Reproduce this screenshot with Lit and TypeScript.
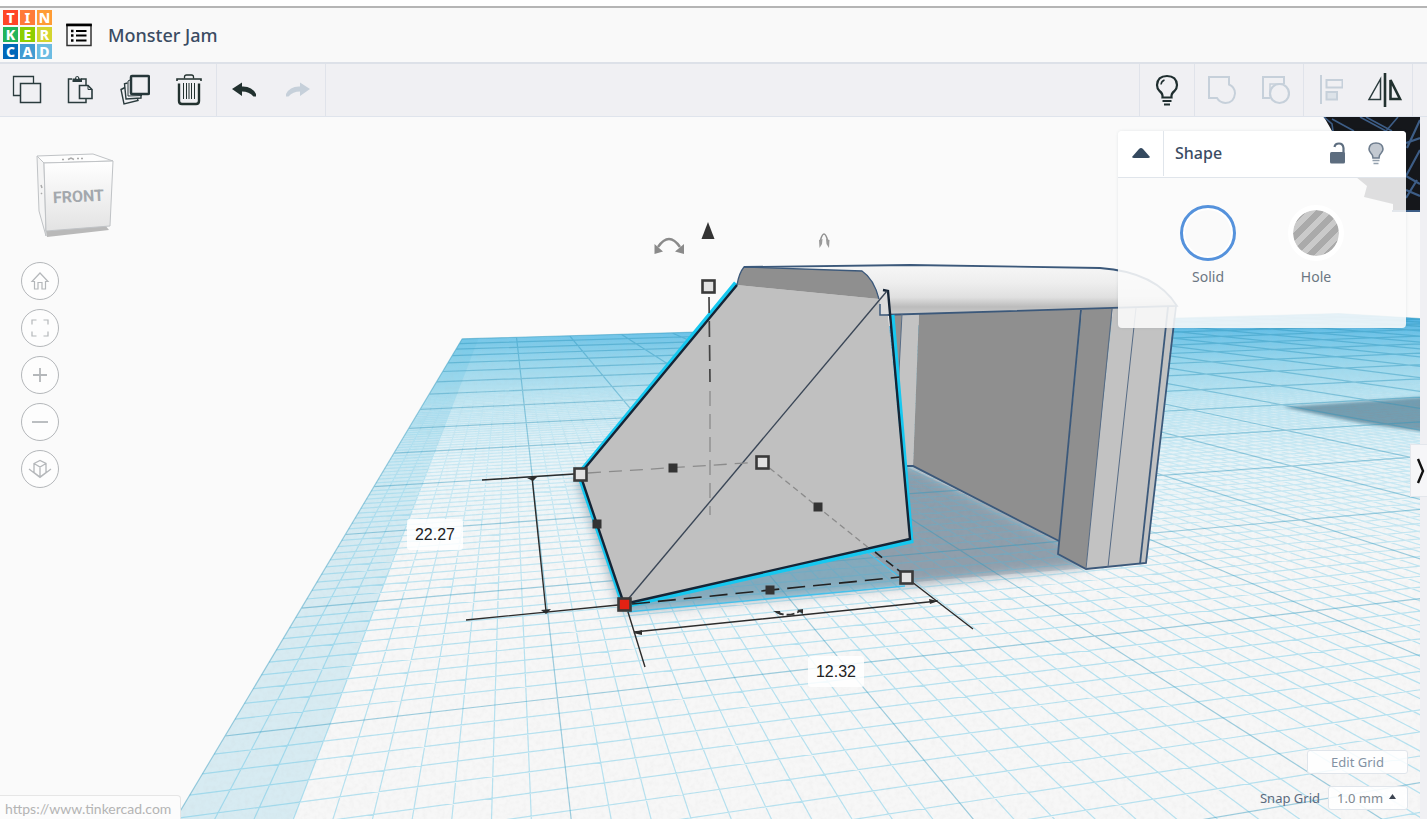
import { LitElement, html, svg, css } from "lit";
import { customElement, property } from "lit/decorators.js";

/* ---------- perspective grid ---------- */
const ORIGIN = [225, 736];
const VANISH_U = [4760, 215];
const VANISH_V = [508, 262];
const U = 0.0791;
const V = 0.3697;
const FAR = 14;
const WIDE = 20;
const NEAR_W = 0.45;

function project(u: number, v: number): [number, number] {
  const w = 1 + u * U + v * V;
  return [0, 1].map(
    (i) => (ORIGIN[i] + u * U * VANISH_U[i] + v * V * VANISH_V[i]) / w,
  ) as [number, number];
}
const pt = (u: number, v: number) => project(u, v).map((n) => n.toFixed(1)).join(" ");
const nearV = (u: number) => (NEAR_W - 1 - u * U) / V;

function gridPaths() {
  let minor = "";
  let major = "";
  for (let i = 0; i <= WIDE * 10; i++) {
    const u = i / 10;
    const d = `M${pt(u, nearV(u))}L${pt(u, FAR)}`;
    if (i % 10 === 0) major += d;
    else minor += d;
  }
  for (let j = -50; j <= FAR * 10; j++) {
    const v = j / 10;
    const start = Math.max(0, (NEAR_W - 1 - v * V) / U);
    if (start >= WIDE) continue;
    const d = `M${pt(start, v)}L${pt(WIDE, v)}`;
    if (j % 10 === 0) major += d;
    else minor += d;
  }
  return { minor, major };
}
const GRID = gridPaths();
const PLANE = `M${pt(0, nearV(0))}L${pt(0, FAR)}L${pt(WIDE, FAR)}L${pt(WIDE, nearV(WIDE))}Z`;
const MARGIN = `M${pt(0, nearV(0))}L${pt(0, FAR)}L${pt(0.3, FAR)}L${pt(0.3, nearV(0.3))}Z`;

@customElement("work-plane")
class WorkPlane extends LitElement {
  static styles = css`
    :host { display: block; }
    svg { display: block; width: 100%; height: 100%; }
  `;
  handle(x: number, y: number, fill = "#e2e2e2") {
    return svg`<rect x=${x - 5.5} y=${y - 5.5} width="12" height="12" fill=${fill} stroke="#3a3a3a" stroke-width="2.6"/>`;
  }
  knob(x: number, y: number) {
    return svg`<rect x=${x - 4.5} y=${y - 4.5} width="9" height="9" fill="#333"/>`;
  }
  render() {
    return html`<svg viewBox="0 117 1420 702" preserveAspectRatio="xMinYMin slice" aria-hidden="true">
      <defs>
        <linearGradient id="sky" gradientUnits="userSpaceOnUse" x1="0" y1="313" x2="0" y2="560">
          <stop offset="0" stop-color="#45abe0"/>
          <stop offset=".09" stop-color="#74c6e9"/>
          <stop offset=".2" stop-color="#a3daee"/>
          <stop offset=".36" stop-color="#d0ebf4"/>
          <stop offset=".6" stop-color="#e9f4f8"/>
          <stop offset="1" stop-color="#f7f7f7"/>
        </linearGradient>
        <linearGradient id="fade" gradientUnits="userSpaceOnUse" x1="0" y1="315" x2="0" y2="620">
          <stop offset="0" stop-color="#fff" stop-opacity=".1"/>
          <stop offset=".3" stop-color="#fff" stop-opacity=".3"/>
          <stop offset="1" stop-color="#fff" stop-opacity=".8"/>
        </linearGradient>
        <mask id="distance" maskUnits="userSpaceOnUse" x="0" y="117" width="1420" height="702">
          <rect x="0" y="117" width="1420" height="702" fill="url(#fade)"/>
        </mask>
        <linearGradient id="roof" gradientUnits="userSpaceOnUse" x1="0" y1="266" x2="0" y2="314">
          <stop offset="0" stop-color="#f6f6f6"/>
          <stop offset=".35" stop-color="#eeeeee"/>
          <stop offset=".65" stop-color="#e0e0e0"/>
          <stop offset=".85" stop-color="#bcbcbc"/>
          <stop offset="1" stop-color="#c9c9c9"/>
        </linearGradient>
        <filter id="soft" x="-20%" y="-20%" width="140%" height="140%"><feGaussianBlur stdDeviation="6"/></filter>
        <filter id="edge" x="-20%" y="-20%" width="140%" height="140%"><feGaussianBlur stdDeviation="1.5"/></filter>
        <filter id="grain" filterUnits="userSpaceOnUse" x="0" y="313" width="1420" height="506">
          <feTurbulence type="fractalNoise" baseFrequency=".22" numOctaves="2" seed="4"/>
          <feColorMatrix values="0 0 0 0 .5  0 0 0 0 .5  0 0 0 0 .5  .5 0 0 0 -.19"/>
          <feComposite in2="SourceGraphic" operator="in"/>
        </filter>
      </defs>
      <rect x="0" y="117" width="1420" height="702" fill="#fafafa"/>
      <path d=${PLANE} fill="url(#sky)"/>
      <path d=${MARGIN} fill="#58bfe0" fill-opacity=".2"/>
      <path d=${PLANE} fill="#000" filter="url(#grain)" opacity=".35"/>

      <path d="M576 478L600 470L890 462L915 466L1062 540L1090 566L960 580L905 586L622 612Z" fill="#4a6478" fill-opacity=".5" filter="url(#soft)"/>
      <path d="M905 466L1062 540L1088 568L960 578L905 583L868 550Z" fill="#5f7488" fill-opacity=".25"/>
      <path d="M1282 407L1425 397V432L1360 423Z" fill="#4f7286" fill-opacity=".68" filter="url(#edge)"/>

      <path d=${GRID.minor} fill="none" stroke="#45bbe2" stroke-width="1.2" mask="url(#distance)" opacity=".45"/>
      <path d=${GRID.major} fill="none" stroke="#2f96bd" stroke-width="1.2" opacity=".45"/>

      <path d="M624 607L870 553L905 585L627 612Z" fill="#5aa5c2" fill-opacity=".4"/>
      <path d="M868 553L905 581M627 612L905 586" fill="none" stroke="#46c0ea" stroke-width="1.5"/>

      <!-- frame with posts -->
      <path d="M889 313H902L899 390Z" fill="#8f8f8f"/>
      <path d="M902 314L919 314L913 466L907 466L898 385Z" fill="#c3c3c3"/>
      <path d="M919 314L1082 309L1059 541L913 467Z" fill="#8f8f8f"/>
      <path d="M1082 309L1113 308L1086 569L1058 554Z" fill="#8f8f8f"/>
      <path d="M1113 308L1175 306L1146 563L1086 569Z" fill="#c2c2c2"/>
      <path d="M744 267L910 265L1100 268Q1156 272 1177 306L880 315V299Q876 280 862 271Z" fill="url(#roof)"/>
      <g fill="none" stroke="#3b587a" stroke-width="1.8">
        <path d="M907 466H913L1059 541"/>
        <path d="M1081 310L1058 554L1086 569L1146 563L1176 306"/>
        <path d="M1168 307L1140 564"/>
        <path d="M744 267L910 265L1100 268Q1156 272 1177 306L880 315V303"/>
        <path d="M1112 309L1086 569M1136 308L1108 567M902 314L898 390" stroke-width="1" stroke="#566b85"/>
      </g>

      <!-- selected solid -->
      <path d="M736 283L579 474L624 606L911 541L892 315" fill="none" stroke="#16c8f0" stroke-width="5"/>
      <path d="M737 285L879 299L880 302L888 315L910 539L624 604L580 474Z" fill="#c0c0c0"/>
      <path d="M880 299V315L889 314L888 291Z" fill="#dcdcdc"/>
      <path d="M737 285Q739 273 744 267L862 271Q874 279 879 299Z" fill="#8f8f8f"/>
      <path d="M737 285Q739 273 744 267L862 271Q874 279 879 299" fill="none" stroke="#3b587a" stroke-width="1.3"/>
      <path d="M880 304V315H889" fill="none" stroke="#3b587a" stroke-width="1.5"/>
      <path d="M737 285L580 474L624 604L910 539L888 291L883 290" fill="none" stroke="#152536" stroke-width="2.4"/>
      <path d="M624 604L887 291" fill="none" stroke="#3a4656" stroke-width="1.4"/>

      <!-- guides -->
      <g fill="none" stroke="#8b8b8b" stroke-width="1.3">
        <path d="M710 391V515" stroke-dasharray="15 8"/>
        <path d="M588 473L762 462" stroke-dasharray="13 8"/>
        <path d="M762 462L870 549" stroke-dasharray="6 4"/>
      </g>
      <path d="M709 297L710 382" fill="none" stroke="#444" stroke-width="1.7" stroke-dasharray="16 8"/>
      <path d="M632 604L900 577" fill="none" stroke="#222" stroke-width="1.6" stroke-dasharray="18 8"/>
      <path d="M875 552L902 573" fill="none" stroke="#222" stroke-width="1.6" stroke-dasharray="9 5"/>

      <!-- dimension lines -->
      <g fill="none" stroke="#2c2c2c" stroke-width="1.4">
        <path d="M482 480L574 474M466 620L618 605M532 477L546 611"/>
        <path d="M628 612L645 667M634 632L938 601M912 582L973 629"/>
      </g>
      <path d="M527 478L538 476L533 481ZM541 610L551 609L546 614ZM633 633L642 630V635ZM938 601L929 599L930 604Z" fill="#2c2c2c"/>
      <path d="M776 612Q788 618 800 611" fill="none" stroke="#333" stroke-width="1.8" stroke-dasharray="8 3"/>
      <path d="M773 611L780 611L781 615ZM797 610L803 609L803 614Z" fill="#333"/>

      ${this.knob(673, 468)}${this.knob(597, 524)}${this.knob(818, 507)}${this.knob(770, 590)}
      ${this.handle(708, 286)}${this.handle(580, 474)}${this.handle(762, 462)}${this.handle(906, 577)}
      ${this.handle(624, 604, "#e32213")}
      <path d="M708 222L714.500 239H701.500Z" fill="#333"/>
      <path d="M658 247Q669 231 680 247" fill="none" stroke="#8a8a8a" stroke-width="2.400"/>
      <path d="M654.500 244V254L663 251.500ZM684 244V254L675 251.500Z" fill="#8a8a8a"/>
      <path d="M820.500 240Q824 228 827.500 240" fill="none" stroke="#8f8f8f" stroke-width="1.500"/>
      <path d="M819 240L822.500 239L822 244L819.500 248ZM829.500 240L826 239L826.500 244L829 248Z" fill="#9a9a9a"/>

      <!-- neighbouring wheel -->
      <path d="M1324 117H1420V212H1393V204L1364 197L1367 186L1356 177L1360 165L1335 150L1332 131Z" fill="#15171b"/>
      <g fill="none" stroke="#3d5d86" stroke-width="1.6">
        <path d="M1324 117L1332 124L1333 131M1332 119L1354 131M1360 117L1386 131M1366 117L1392 131M1398 117L1386 131"/>
        <path d="M1420 120L1407 148M1406 143L1420 138M1420 150L1406 176M1406 176L1420 184M1417 180L1406 198M1406 190L1420 196M1392 211H1420" stroke-width="2.2"/>
      </g>
    </svg>`;
  }
}

/* ---------- icons ---------- */
const icon = (w: number, h: number, body: unknown) =>
  html`<svg width=${w} height=${h} viewBox="0 0 ${w} ${h}" fill="none" aria-hidden="true">${body}</svg>`;

const icons = {
  list: icon(26, 24, svg`<rect x="1" y="1.500" width="24" height="21" stroke="#333" stroke-width="1.500"/><path d="M.2 2H25.800" stroke="#000" stroke-width="2.600"/><path d="M10 8H20.500M10 12.500H20.500M10 17.500H20.500" stroke="#000" stroke-width="2"/><path d="M5 8H7.500M5 12.500H7.500M5 17.500H7.500" stroke="#000" stroke-width="2.400"/>`),
  copy: icon(30, 30, svg`<path d="M8 20.500H1.500V1.500H21.500V8" stroke="#2a3b3d" stroke-width="1.300"/><rect x="8.500" y="8.500" width="20" height="19" stroke="#2a3b3d" stroke-width="1.500"/>`),
  paste: icon(28, 30, svg`<path d="M5 4H1.500V27.500H19V23M14 4H19V10" stroke="#2a3b3d" stroke-width="1.500"/><path d="M5.500 7V3.500H8Q8 1 10.200 1T12.500 3.500H15V7Z" fill="#2a3b3d"/><circle cx="10.200" cy="3" r="1" fill="#f0f0f3"/><path d="M12.500 10.500H21L25 14.500V23.500H12.500Z" stroke="#2a3b3d" stroke-width="1.600" fill="#f0f0f3"/><path d="M21 10.500V14.500H25" stroke="#2a3b3d"/>`),
  duplicate: icon(30, 32, svg`<path d="M5 13.500L1 15.500L4 30L18 26.500L17.500 25" stroke="#2a3b3d" stroke-width="1.400"/><path d="M7.500 9L4.500 9.800L6 25L21 24V21.500" stroke="#2a3b3d" stroke-width="1.400"/><path d="M10 6L8 7V22L22 21.500" stroke="#2a3b3d" stroke-width="1"/><rect x="11" y="2" width="18" height="18" rx="1" stroke="#26373a" stroke-width="2.500" fill="#f0f0f3"/>`),
  trash: icon(26, 34, svg`<path d="M1 8V6H25V8" stroke="#22312f" stroke-width="1.600"/><path d="M8.500 5.500V4Q8.500 2 10.500 2H15.500Q17.500 2 17.500 4V5.500" stroke="#22312f" stroke-width="1.300"/><path d="M3 10.500V28Q3 31 6 31H20Q23 31 23 28V10.500" stroke="#22312f" stroke-width="2.400"/><path d="M7.500 10V26M10.500 10V26M13 10V26M15.500 10V26M18.500 10V26" stroke="#22312f" stroke-width="1"/>`),
  undo: icon(24, 18, svg`<path d="M0 8L10 1.500V5.500Q20 5 24 13V15.500H21.500Q17 10.500 10 10.500V15Z" fill="#22312f"/>`),
  redo: icon(24, 18, svg`<path d="M24 8L14 1.500V5.500Q4 5 0 13V15.500H2.500Q7 10.500 14 10.500V15Z" fill="#c6d0da"/>`),
  bulb: icon(24, 34, svg`<path d="M7.500 24.500Q8 20.500 4.500 18Q2 15.500 2 12Q2.500 3 12 3Q21.500 3 22 12Q22 15.500 19.500 18Q16 20.500 16.500 24.500Z" stroke="#1f2e2f" stroke-width="2.200"/><path d="M6 11.500Q6.500 8 9.500 7" stroke="#1f2e2f" stroke-width="1.500"/><path d="M7.500 28H16.500M9 31.500H15" stroke="#1f2e2f" stroke-width="1.800"/>`),
  group: icon(28, 30, svg`<path d="M1 2H21V9.500Q27 12 27 18.500Q26 28 17.500 28Q11.500 27.500 9 23H1Z" stroke="#c6d0da" stroke-width="2"/>`),
  ungroup: icon(28, 30, svg`<path d="M8 23H1V2H22V9" stroke="#c6d0da" stroke-width="2"/><path d="M8 21V9H21" stroke="#c6d0da" stroke-width="1.500"/><circle cx="17.500" cy="18.500" r="9.500" stroke="#c6d0da" stroke-width="2.200"/>`),
  align: icon(24, 30, svg`<path d="M2 0V29" stroke="#c6d0da" stroke-width="2"/><rect x="7.500" y="5" width="16" height="7.500" stroke="#c6d0da" stroke-width="2"/><rect x="7.500" y="17" width="10.500" height="7.500" stroke="#c6d0da" stroke-width="2" fill="#dde3e9"/>`),
  mirror: icon(36, 34, svg`<path d="M13.500 6V26.500H2Z" stroke="#2a3b3d" stroke-width="1.500"/><path d="M18 0V34" stroke="#22312f" stroke-width="2.600"/><path d="M23.500 7V26H33Z" stroke="#22312f" stroke-width="2.600"/>`),
  home: icon(20, 20, svg`<path d="M2 10.500L10 2L18 10.500H15.500V18H12V11.500H8V18H4.500V10.500Z" stroke="#b4b7ba" stroke-width="1.200"/>`),
  fit: icon(20, 20, svg`<path d="M2 6.500V2H6.500M13.500 2H18V6.500M18 13.500V18H13.500M6.500 18H2V13.500" stroke="#b4b7ba" stroke-width="1.200"/>`),
  plus: icon(20, 20, svg`<path d="M10 3V17M3 10H17" stroke="#b4b7ba" stroke-width="1.800"/>`),
  minus: icon(20, 20, svg`<path d="M2 10H18" stroke="#b4b7ba" stroke-width="1.800"/>`),
  ortho: icon(24, 20, svg`<path d="M6 4.500L12 1.500L18 4.500V13.500L12 18L6 13.500ZM6 4.500L12 8L18 4.500M12 8V18M1 10L12 18.500L23 10" stroke="#b4b7ba" stroke-width="1.300"/>`),
  up: icon(18, 12, svg`<path d="M0 10L7 2Q9 0 11 2L18 10Q17.500 11 16 11H2Q.5 11 0 10Z" fill="#34495f"/>`),
  lock: icon(16, 22, svg`<rect x="0" y="10" width="15" height="11.500" rx="1.500" fill="#5d6d7f"/><path d="M4.500 5Q5 1.500 9 1.500T13.500 6V11" stroke="#5d6d7f" stroke-width="2.200"/>`),
  lamp: icon(16, 23, svg`<path d="M5 16Q5 13 2.800 11Q1 9 1 7Q1.500 1 8 1T15 7Q15 9 13.200 11Q11 13 11 16Z" fill="#c3c9d1" stroke="#6f7e8f" stroke-width="1.600"/><path d="M4.500 18.500H11.500M5.500 21.500H10.500" stroke="#93a0ad" stroke-width="1.600"/>`),
};

const LOGO: [string, string][] = [
  ["T", "#ff4527"], ["I", "#ff7a38"], ["N", "#ff9c35"],
  ["K", "#22b45b"], ["E", "#8fce00"], ["R", "#d3d52f"],
  ["C", "#0067b9"], ["A", "#409bd2"], ["D", "#6cbce2"],
];

@customElement("tool-button")
class ToolButton extends LitElement {
  @property() name = "copy";
  @property() label = "";
  @property({ type: Boolean }) off = false;
  static styles = css`
    :host { display: flex; justify-content: center; align-items: center; }
    button { display: flex; border: 0; padding: 0; background: none; }
    svg { display: block; }
  `;
  render() {
    return html`<button type="button" aria-label=${this.label} ?disabled=${this.off}>${(icons as any)[this.name]}</button>`;
  }
}

@customElement("app-root")
class AppRoot extends LitElement {
  static styles = css`
    :host {
      display: flex; flex-direction: column; height: 100vh; overflow: hidden;
      background: #f0f0f3; color: #3b4c63;
      font-family: "Noto Sans", "Open Sans", sans-serif;
    }
    * { box-sizing: border-box; }
    button, input, select { font: inherit; color: inherit; margin: 0; }
    svg { display: block; }
    .header {
      display: flex; align-items: center; height: 64px; flex: none; padding: 1px 0 0 3px;
      background: #f9f9f9; border-top: 6px solid #fff; border-bottom: 2px solid #dde1e8;
      position: relative;
    }
    .header::before { content: ""; position: absolute; left: 0; right: 0; top: 0; height: 2px; background: #b5b5b5; }
    .logo { display: grid; grid-template-columns: repeat(3, 15px); grid-auto-rows: 15px; gap: 2px; text-decoration: none; }
    .tile { color: #fff; font-weight: 800; font-size: 14px; line-height: 15px; text-align: center; }
    .menu { display: flex; margin-left: 14px; border: 0; padding: 0; background: none; }
    h1 { margin: 0 0 0 16px; font-size: 18px; line-height: 24px; font-weight: 500; }
    .toolbar { display: flex; height: 53px; flex: none; background: #f0f0f3; border-bottom: 1px solid #dfe4ec; }
    .set { display: grid; grid-auto-flow: column; grid-auto-columns: 54px; border-right: 1px solid #e0e3ea; }
    .set.first { border-left: 1px solid #e0e3ea; }
    .set.last { margin-right: 14px; }
    .space { flex: 1; }
    .stage { flex: 1; display: grid; grid-template-columns: 1fr 7px; min-height: 0; position: relative; overflow: hidden; }
    work-plane { min-height: 0; overflow: hidden; }
    .views { position: absolute; left: 21px; top: 29px; display: flex; flex-direction: column; }
    .cube { margin-left: 7px; }
    .cube text { font: 700 16px Roboto, "Noto Sans", sans-serif; fill: #a3a8ad; }
    .round {
      display: grid; place-items: center; width: 38px; height: 38px; border-radius: 50%; padding: 0;
      border: 1px solid #b4b7ba; background: #fdfdfd;
    }
    .rounds { display: grid; gap: 9px; margin-top: 20px; }
    .size {
      position: absolute; width: 56px; height: 31px; border: 0; border-radius: 3px; padding: 0;
      background: rgba(255, 255, 255, 0.85); color: #222; text-align: center;
      font: 16px "Liberation Sans", Arial, sans-serif;
    }
    .depth { left: 407px; top: 402px; }
    .width { left: 808px; top: 539px; }
    .panel {
      position: absolute; right: 21px; top: 14px; width: 288px; border-radius: 4px; overflow: hidden;
      background: rgba(250, 250, 250, 0.88); box-shadow: 0 0 3px rgba(60, 80, 100, 0.12);
    }
    .bar { display: flex; align-items: center; height: 47px; background: #fff; border-bottom: 1px solid #e0e5eb; padding: 0 22px 2px 0; }
    .plain { display: flex; border: 0; padding: 0; background: none; }
    .fold { width: 46px; height: 46px; justify-content: center; align-items: center; border-right: 1px solid #e0e5eb; }
    h2 { flex: 1; margin: 0 0 0 11px; font-size: 16px; line-height: 22px; font-weight: 500; }
    .lamp { margin-left: 22px; }
    fieldset { display: grid; grid-template-columns: 108px 108px; justify-content: center; height: 150px; border: 0; margin: 0; padding: 27px 0 0; }
    .kind { display: flex; flex-direction: column; align-items: center; gap: 7px; font-size: 14px; line-height: 18px; color: #6b7682; }
    .kind input { appearance: none; width: 56px; height: 56px; border-radius: 50%; border: 5px solid #fff; background: #fafafa; }
    .kind input:checked { border: 3px solid #5592dc; box-shadow: inset 0 0 0 2px #fff; }
    .kind .hole { background: repeating-linear-gradient(135deg, #aaa 0 6px, #cacaca 6px 12px) border-box; background-clip: padding-box; }
    .grid-tools { position: absolute; right: 19px; bottom: 9px; display: flex; flex-direction: column; align-items: flex-end; gap: 12px; font-size: 13px; }
    .edit { width: 101px; height: 24px; padding: 0; border: 1px solid #e0e5eb; border-radius: 3px; background: rgba(255, 255, 255, 0.85); color: #8392a3; }
    .snap { display: flex; align-items: center; gap: 8px; height: 24px; color: #5b6a7d; }
    .pick { position: relative; display: flex; }
    select { appearance: none; width: 80px; height: 24px; padding: 0 8px; border: 1px solid #e0e5eb; border-radius: 3px; background: rgba(255, 255, 255, 0.9); color: #808890; }
    .pick svg { position: absolute; right: 12px; top: 8px; pointer-events: none; }
    .drawer {
      position: absolute; right: 0; top: 327px; width: 17px; height: 53px; padding: 0;
      border: 1px solid #e4e7ec; border-right: 0; background: #f6f6f8; display: grid; place-items: center end;
    }
    .status {
      position: absolute; left: 0; bottom: 0; height: 24px; padding: 0 9px 0 5px; border: 1px solid #e6e6e6;
      border-width: 1px 1px 0 0; border-radius: 0 4px 0 0; background: #fcfcfc; color: #b4b4b4;
      font: 14px/25px Lato, "Noto Sans", sans-serif; text-decoration: none;
    }
  `;

  render() {
    return html`
      <header class="header">
        <a class="logo" href="#" aria-label="Tinkercad home">
          ${LOGO.map(([c, bg]) => html`<span class="tile" style="background:${bg}">${c}</span>`)}
        </a>
        <button class="menu" type="button" aria-label="Designs">${icons.list}</button>
        <h1>Monster Jam</h1>
      </header>
      <nav class="toolbar" aria-label="Tools">
        <div class="set">
          <tool-button name="copy" label="Copy"></tool-button>
          <tool-button name="paste" label="Paste"></tool-button>
          <tool-button name="duplicate" label="Duplicate"></tool-button>
          <tool-button name="trash" label="Delete"></tool-button>
        </div>
        <div class="set">
          <tool-button name="undo" label="Undo"></tool-button>
          <tool-button name="redo" label="Redo" off></tool-button>
        </div>
        <div class="space"></div>
        <div class="set first"><tool-button name="bulb" label="Show all"></tool-button></div>
        <div class="set">
          <tool-button name="group" label="Group" off></tool-button>
          <tool-button name="ungroup" label="Ungroup" off></tool-button>
        </div>
        <div class="set last">
          <tool-button name="align" label="Align" off></tool-button>
          <tool-button name="mirror" label="Mirror"></tool-button>
        </div>
      </nav>
      <main class="stage">
        <work-plane></work-plane>
        <div class="views">
          <svg class="cube" width="90" height="96" viewBox="28 146 90 96" aria-label="View cube">
            <defs>
              <linearGradient id="face" x1="0" y1="0" x2="0" y2="1"><stop offset="0" stop-color="#fff"/><stop offset="1" stop-color="#e3e3e3"/></linearGradient>
            </defs>
            <path d="M46 231L105 225L109 230L47 237Z" fill="#b9b9b9"/>
            <path d="M37 156L44 163L46 236L39 211Z" fill="#f4f4f4" stroke="#c0c3c6"/>
            <path d="M37 156L93 154L113 161L44 163Z" fill="#fdfdfd" stroke="#c0c3c6"/>
            <path d="M44 163L113 161L110 226L46 231Z" fill="url(#face)" stroke="#c0c3c6"/>
            <path d="M62 159.500H64M68 159.500L71 158L74 159.500M77 158.500H79M81 158.500H83M41 185L42 188M41 193L42 194" stroke="#aaa" stroke-width="1.500" fill="none"/>
            <text x="78.500" y="202" text-anchor="middle" transform="rotate(-3 78 197)">FRONT</text>
          </svg>
          <div class="rounds">
            <button class="round" type="button" aria-label="Home view">${icons.home}</button>
            <button class="round" type="button" aria-label="Fit all">${icons.fit}</button>
            <button class="round" type="button" aria-label="Zoom in">${icons.plus}</button>
            <button class="round" type="button" aria-label="Zoom out">${icons.minus}</button>
            <button class="round" type="button" aria-label="Orthographic view">${icons.ortho}</button>
          </div>
        </div>
        <input class="size depth" aria-label="Depth" value="22.27" />
        <input class="size width" aria-label="Width" value="12.32" />
        <section class="panel">
          <div class="bar">
            <button class="plain fold" type="button" aria-label="Collapse">${icons.up}</button>
            <h2>Shape</h2>
            <button class="plain" type="button" aria-label="Lock">${icons.lock}</button>
            <button class="plain lamp" type="button" aria-label="Hide">${icons.lamp}</button>
          </div>
          <fieldset aria-label="Material">
            <label class="kind"><input type="radio" name="kind" checked />Solid</label>
            <label class="kind"><input class="hole" type="radio" name="kind" />Hole</label>
          </fieldset>
        </section>
        <div class="grid-tools">
          <button class="edit" type="button">Edit Grid</button>
          <div class="snap">
            <label for="snap">Snap Grid</label>
            <span class="pick">
              <select id="snap"><option>1.0 mm</option></select>
              <svg width="7" height="6" viewBox="0 0 7 6"><path d="M0 5L3.500 0L7 5Z" fill="#3c4450"/></svg>
            </span>
          </div>
        </div>
        <button class="drawer" type="button" aria-label="Open shapes panel">
          <svg width="12" height="26" viewBox="0 0 12 26"><path d="M3 1L8 13L3 25" fill="none" stroke="#111" stroke-width="2.400"/></svg>
        </button>
        <a class="status" href="#">https://www.tinkercad.com</a>
      </main>
    `;
  }
}
